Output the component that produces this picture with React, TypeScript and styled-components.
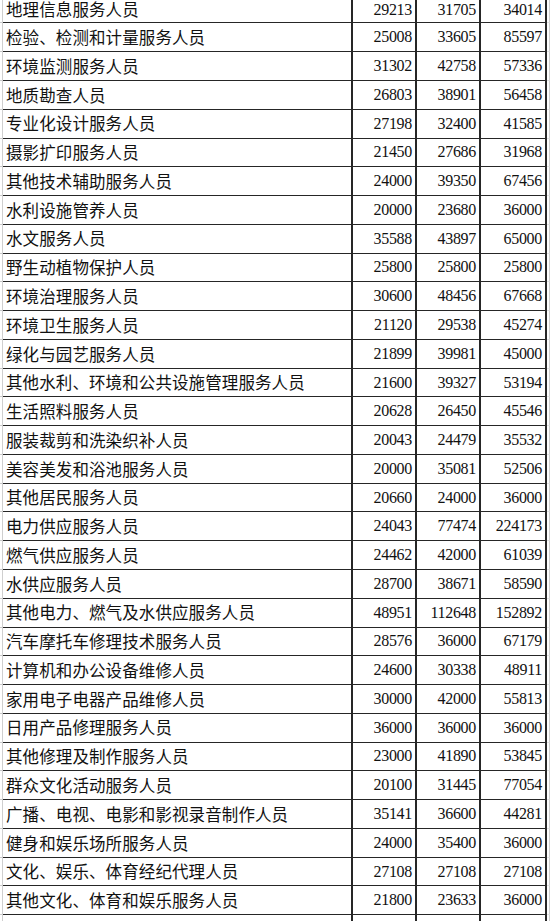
import React from "react";
import styled, { createGlobalStyle } from "styled-components";

const GlobalStyle = createGlobalStyle`
  html, body {
    margin: 0;
    padding: 0;
    background: #ffffff;
  }
`;

type Row = [string, number, number, number];

const rows: Row[] = [
  ["地理信息服务人员", 29213, 31705, 34014],
  ["检验、检测和计量服务人员", 25008, 33605, 85597],
  ["环境监测服务人员", 31302, 42758, 57336],
  ["地质勘查人员", 26803, 38901, 56458],
  ["专业化设计服务人员", 27198, 32400, 41585],
  ["摄影扩印服务人员", 21450, 27686, 31968],
  ["其他技术辅助服务人员", 24000, 39350, 67456],
  ["水利设施管养人员", 20000, 23680, 36000],
  ["水文服务人员", 35588, 43897, 65000],
  ["野生动植物保护人员", 25800, 25800, 25800],
  ["环境治理服务人员", 30600, 48456, 67668],
  ["环境卫生服务人员", 21120, 29538, 45274],
  ["绿化与园艺服务人员", 21899, 39981, 45000],
  ["其他水利、环境和公共设施管理服务人员", 21600, 39327, 53194],
  ["生活照料服务人员", 20628, 26450, 45546],
  ["服装裁剪和洗染织补人员", 20043, 24479, 35532],
  ["美容美发和浴池服务人员", 20000, 35081, 52506],
  ["其他居民服务人员", 20660, 24000, 36000],
  ["电力供应服务人员", 24043, 77474, 224173],
  ["燃气供应服务人员", 24462, 42000, 61039],
  ["水供应服务人员", 28700, 38671, 58590],
  ["其他电力、燃气及水供应服务人员", 48951, 112648, 152892],
  ["汽车摩托车修理技术服务人员", 28576, 36000, 67179],
  ["计算机和办公设备维修人员", 24600, 30338, 48911],
  ["家用电子电器产品维修人员", 30000, 42000, 55813],
  ["日用产品修理服务人员", 36000, 36000, 36000],
  ["其他修理及制作服务人员", 23000, 41890, 53845],
  ["群众文化活动服务人员", 20100, 31445, 77054],
  ["广播、电视、电影和影视录音制作人员", 35141, 36600, 44281],
  ["健身和娱乐场所服务人员", 24000, 35400, 36000],
  ["文化、娱乐、体育经纪代理人员", 27108, 27108, 27108],
  ["其他文化、体育和娱乐服务人员", 21800, 23633, 36000],
];

const Sheet = styled.div`
  width: 550px;
  height: 921px;
  overflow: hidden;
  background: #ffffff;
`;

const Table = styled.div`
  display: flex;
  flex-direction: column;
`;

const RowLine = styled.div<{ $first?: boolean }>`
  display: grid;
  grid-template-columns: 3px 350px 64px 64px 66px 3px;
  height: ${(p) => (p.$first ? "23.48px" : "28.78px")};
  flex-shrink: 0;
`;

const Gutter = styled.div<{ $side: "left" | "right" }>`
  box-sizing: border-box;
  border-bottom: 1px solid #c9c9c9;
  border-right: 1px solid #cfcfcf;
  ${(p) => (p.$side === "right" ? "border-bottom-color: #e2e2e2;" : "")}
`;

const Cell = styled.div<{ $open?: boolean; $first?: boolean }>`
  box-sizing: border-box;
  display: flex;
  align-items: center;
  border-right: 2px solid #262626;
  border-bottom: ${(p) => (p.$open ? "none" : "1.5px solid #262626")};
  color: #111111;
  white-space: nowrap;
  ${(p) => (p.$first ? "padding-bottom: 3px;" : "")}
`;

const NameCell = styled(Cell)`
  padding-left: 3px;
  font-family: "Noto Sans CJK SC", "Noto Sans", sans-serif;
  font-size: 16.5px;
  line-height: 1;
  letter-spacing: 0.1px;
`;

const NumCell = styled(Cell)`
  justify-content: flex-end;
  padding-right: 3px;
  font-family: "Liberation Serif", "Times New Roman", serif;
  font-size: 16px;
  line-height: 1;
  letter-spacing: -0.3px;
`;

export default function App() {
  return (
    <>
      <GlobalStyle />
      <Sheet>
        <Table>
          {rows.map(([name, a, b, c], i) => {
            const first = i === 0;
            return (
              <RowLine key={name} $first={first}>
                <Gutter $side="left" />
                <NameCell $first={first}>{name}</NameCell>
                <NumCell $first={first}>{a}</NumCell>
                <NumCell $first={first}>{b}</NumCell>
                <NumCell $first={first}>{c}</NumCell>
                <Gutter $side="right" />
              </RowLine>
            );
          })}
          <RowLine>
            <Gutter $side="left" />
            <NameCell $open />
            <NumCell $open />
            <NumCell $open />
            <NumCell $open />
            <Gutter $side="right" />
          </RowLine>
        </Table>
      </Sheet>
    </>
  );
}
